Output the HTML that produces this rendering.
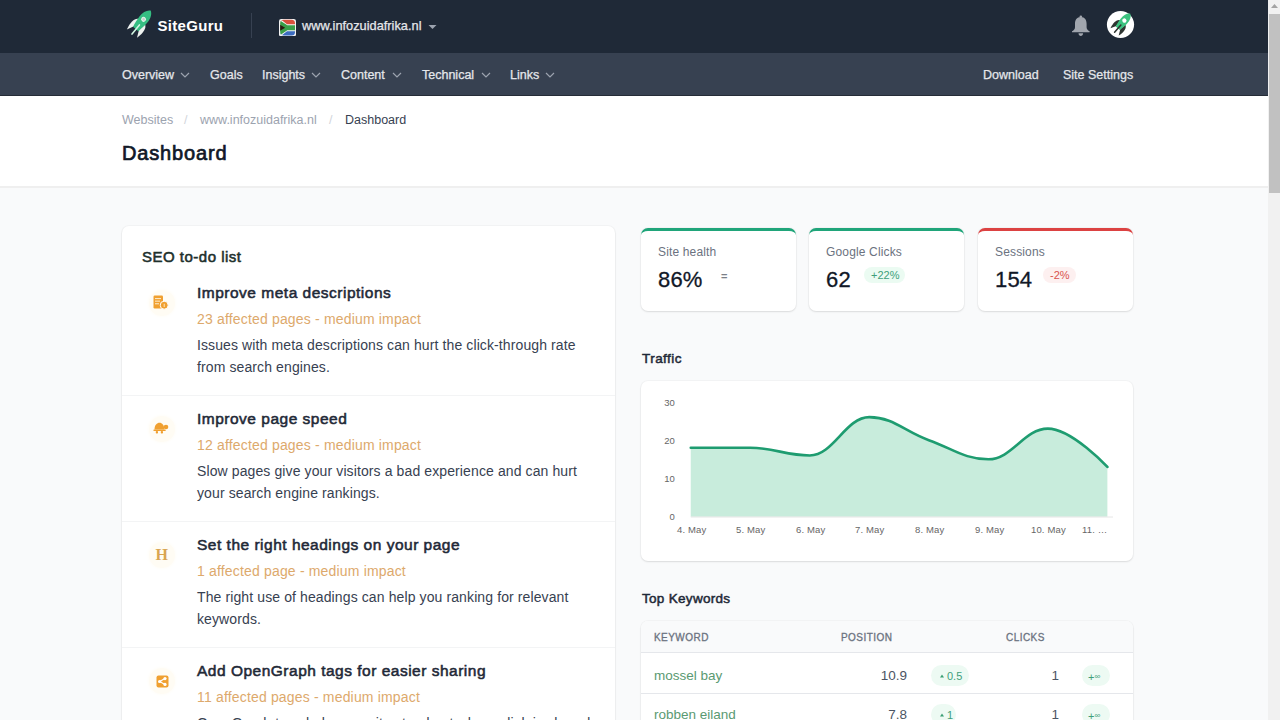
<!DOCTYPE html>
<html><head><meta charset="utf-8">
<style>
*{box-sizing:border-box;margin:0;padding:0}
html,body{width:1280px;height:720px;overflow:hidden}
body{font-family:"Liberation Sans",sans-serif;background:#f9fafb;position:relative;color:#111827}
.a{position:absolute;white-space:nowrap;line-height:1}
#top{position:absolute;left:0;top:0;width:1268px;height:53px;background:#1f2937}
#nav{position:absolute;left:0;top:53px;width:1268px;height:43px;background:#374151;border-bottom:1px solid #252c37}
#hdr{position:absolute;left:0;top:96px;width:1268px;height:92px;background:#fff;border-bottom:2px solid #efefef}
#sb{position:absolute;left:1268px;top:0;width:12px;height:720px;background:#f1f1f1}
#thumb{position:absolute;left:1269px;top:14px;width:11px;height:179px;background:#c1c1c1}
.nv{font-size:12.5px;color:#e5e7eb;top:69px;-webkit-text-stroke:.25px #e5e7eb}
.chev{position:absolute;top:72px;width:10px;height:6px}
.card{position:absolute;background:#fff;border-radius:7px;box-shadow:0 1px 2px rgba(0,0,0,.10),0 0 0 1px rgba(0,0,0,.025)}
.it{position:absolute;left:197px;font-size:15.5px;font-weight:normal;color:#1f2937;letter-spacing:.5px;-webkit-text-stroke:.55px #1f2937}
.sub{position:absolute;left:197px;font-size:14px;color:#dda96c;letter-spacing:.17px}
.desc{position:absolute;left:197px;font-size:14px;line-height:22.4px;color:#374151;white-space:nowrap;letter-spacing:.11px}
.sep{position:absolute;left:122px;width:493px;height:1px;background:#f3f4f5}
.ic{position:absolute;left:148.5px;width:26px;height:26px;border-radius:50%;background:#fffcf4;box-shadow:0 0 3px 1px #fffdf8}
.lbl{font-size:12px;color:#6b7280;top:246px;letter-spacing:.15px}
.val{font-size:22px;color:#111827;top:269px;letter-spacing:.2px;-webkit-text-stroke:.3px #111827}
.ax{font-size:9.5px;color:#666;letter-spacing:.15px}
.th{font-size:10px;font-weight:normal;color:#6b7280;letter-spacing:.45px;top:632.5px;-webkit-text-stroke:.3px #6b7280}
.kw{font-size:13.5px;color:#5a9a72}
.num{font-size:13.5px;color:#4b5563}
.pill{position:absolute;background:#edfaf3;border-radius:11px}
.pt{font-size:11px;color:#3f9f7b}
</style></head><body>
<div id="top"></div>
<div id="nav"></div>
<div id="hdr"></div>
<div id="sb"></div><div id="thumb"></div>
<svg style="position:absolute;left:1270px;top:3px" width="9" height="6"><path d="M1,5 L4.5,1 L8,5 Z" fill="#a3a3a3"/></svg>

<!-- logo -->
<svg style="position:absolute;left:118px;top:4px" width="40" height="40" viewBox="118 4 40 40">
 <g transform="translate(143.6,19.3) rotate(39)">
  <path d="M-4.2,3 C-7.5,4.5 -8.8,10 -6.5,18.5 L-3.2,11.5 Z" fill="#eef2f0"/>
  <path d="M4.2,3 C7.5,4.5 8.8,10 6.5,18.5 L3.2,11.5 Z" fill="#eef2f0"/>
  <path d="M0,-11.2 C3.2,-9.5 5.3,-5 5,0.5 C4.8,5 4.2,9 3.4,12.5 L-3.4,12.5 C-4.2,9 -4.8,5 -5,0.5 C-5.3,-5 -3.2,-9.5 0,-11.2 Z" fill="#35be82"/>
  <circle cx="0" cy="0" r="1.9" fill="#c9cfcb" stroke="#dff7ea" stroke-width="1.1"/>
  <line x1="0.3" y1="7" x2="0.3" y2="18.8" stroke="#d2f6e3" stroke-width="1.6" stroke-linecap="round"/>
 </g>
</svg>
<div class="a" style="left:157.5px;top:17.8px;font-size:15px;font-weight:bold;color:#fff;letter-spacing:.3px">SiteGuru</div>
<div style="position:absolute;left:251px;top:13px;width:1px;height:25px;background:#374151"></div>
<!-- flag -->
<svg style="position:absolute;left:278.5px;top:18.7px" width="17" height="17.5" viewBox="0 0 17 17.5">
 <defs><clipPath id="fc"><rect x="1.2" y="0.8" width="14.8" height="15.8" rx="3.5"/></clipPath></defs>
 <rect x="0" y="0" width="17" height="17.5" rx="2.2" fill="#f2f2f2"/>
 <g clip-path="url(#fc)">
  <rect x="0" y="0" width="17" height="8.7" fill="#d9503c"/>
  <rect x="0" y="8.7" width="17" height="9" fill="#3b6cc0"/>
  <path d="M0,-1 L8,5.2 L17,5.2 L17,12.2 L8,12.2 L0,18.5 Z" fill="#f4f4f4"/>
  <path d="M0,0.8 L8.3,6.2 L17,6.2 L17,11.2 L8.3,11.2 L0,16.8 Z" fill="#3a9e48"/>
  <path d="M0,5.2 L6.2,8.7 L0,12.2 Z" fill="#2b1a10"/>
 </g>
</svg>
<div class="a" style="left:302px;top:20px;font-size:12.8px;color:#e5e7eb;-webkit-text-stroke:.25px #e5e7eb">www.infozuidafrika.nl</div>
<svg style="position:absolute;left:428px;top:24px" width="9" height="6"><path d="M0.5,1 L8.5,1 L4.5,5 Z" fill="#9ca3af"/></svg>

<!-- bell -->
<svg style="position:absolute;left:1070px;top:14px" width="22" height="23" viewBox="0 0 22 23">
 <circle cx="10.8" cy="2.7" r="1.3" fill="#a1a6ae"/>
 <path d="M10.8,3 C14.9,3 16.6,6.2 16.6,10 L16.6,13.3 C16.6,15.4 18.2,16.6 19.6,17.3 L19.6,18.3 L2,18.3 L2,17.3 C3.4,16.6 5,15.4 5,13.3 L5,10 C5,6.2 6.7,3 10.8,3 Z" fill="#a1a6ae"/>
 <path d="M8.5,19.2 L13.1,19.2 C13,20.9 12,22 10.8,22 C9.6,22 8.6,20.9 8.5,19.2 Z" fill="#a1a6ae"/>
</svg>
<!-- avatar -->
<svg style="position:absolute;left:1106px;top:10px" width="29" height="29" viewBox="0 0 29 29">
 <circle cx="14.5" cy="14.5" r="13.6" fill="#fff"/>
 <g transform="translate(18.4,10.6) rotate(41) scale(.81)">
  <path d="M-4.2,3 C-7.8,4.5 -9.2,10 -6.8,18.5 L-3.2,11.5 Z" fill="#2e3531"/>
  <path d="M4.2,3 C7.8,4.5 9.2,10 6.8,18.5 L3.2,11.5 Z" fill="#2e3531"/>
  <path d="M0,-11.2 C3.2,-9.5 5.3,-5 5,0.5 C4.8,5 4.2,9 3.4,12.5 L-3.4,12.5 C-4.2,9 -4.8,5 -5,0.5 C-5.3,-5 -3.2,-9.5 0,-11.2 Z" fill="#3cc27f"/>
  <circle cx="0" cy="0" r="2.6" fill="#fff"/>
  <line x1="0.3" y1="7" x2="0.3" y2="18.8" stroke="#2e3531" stroke-width="1.9" stroke-linecap="round"/>
 </g>
</svg>

<div class="a nv" style="left:122px">Overview</div>
<div class="a nv" style="left:210px">Goals</div>
<div class="a nv" style="left:262px">Insights</div>
<div class="a nv" style="left:341px">Content</div>
<div class="a nv" style="left:422px">Technical</div>
<div class="a nv" style="left:510px">Links</div>
<div class="a nv" style="left:983px">Download</div>
<div class="a nv" style="left:1063px">Site Settings</div>
<svg class="chev" style="left:180px" viewBox="0 0 10 6"><path d="M1,1 L5,5 L9,1" fill="none" stroke="#9ca3af" stroke-width="1.2"/></svg>
<svg class="chev" style="left:311px" viewBox="0 0 10 6"><path d="M1,1 L5,5 L9,1" fill="none" stroke="#9ca3af" stroke-width="1.2"/></svg>
<svg class="chev" style="left:392px" viewBox="0 0 10 6"><path d="M1,1 L5,5 L9,1" fill="none" stroke="#9ca3af" stroke-width="1.2"/></svg>
<svg class="chev" style="left:481px" viewBox="0 0 10 6"><path d="M1,1 L5,5 L9,1" fill="none" stroke="#9ca3af" stroke-width="1.2"/></svg>
<svg class="chev" style="left:545px" viewBox="0 0 10 6"><path d="M1,1 L5,5 L9,1" fill="none" stroke="#9ca3af" stroke-width="1.2"/></svg>

<div class="a" style="left:122px;top:114px;font-size:12.5px;color:#9ca3af">Websites</div>
<div class="a" style="left:184px;top:114px;font-size:12.5px;color:#d1d5db">/</div>
<div class="a" style="left:200px;top:114px;font-size:12.5px;color:#9ca3af">www.infozuidafrika.nl</div>
<div class="a" style="left:329px;top:114px;font-size:12.5px;color:#d1d5db">/</div>
<div class="a" style="left:345px;top:114px;font-size:12.5px;color:#374151">Dashboard</div>
<div class="a" style="left:122px;top:143px;font-size:20px;font-weight:normal;color:#111827;letter-spacing:.85px;-webkit-text-stroke:.7px #111827">Dashboard</div>

<!-- left card -->
<div class="card" style="left:122px;top:226px;width:493px;height:560px"></div>
<div class="a" style="left:142px;top:249px;font-size:15px;font-weight:normal;color:#1e302c;letter-spacing:.5px;-webkit-text-stroke:.55px #1e302c">SEO to-do list</div>

<div class="ic" style="top:289.5px"></div>
<svg style="position:absolute;left:153px;top:295px" width="16" height="15" viewBox="0 0 16 15">
 <rect x="0.5" y="0.5" width="9.5" height="13" rx="1.2" fill="#f0a030"/>
 <rect x="2" y="3" width="6" height="1.1" fill="#fde6c0"/><rect x="2" y="5.6" width="5" height="1.1" fill="#fde6c0"/><rect x="2" y="8.2" width="4" height="1.1" fill="#fde6c0"/>
 <circle cx="11.2" cy="10.2" r="4" fill="#f0a030" stroke="#fff" stroke-width="1"/>
 <rect x="10.7" y="8.8" width="1" height="3.2" fill="#fde6c0"/>
</svg>
<div class="a it" style="top:285px">Improve meta descriptions</div>
<div class="a sub" style="top:312px">23 affected pages - medium impact</div>
<div class="desc" style="top:334px">Issues with meta descriptions can hurt the click-through rate<br>from search engines.</div>
<div class="sep" style="top:395px"></div>

<div class="ic" style="top:415.5px"></div>
<svg style="position:absolute;left:153px;top:421px" width="16" height="14" viewBox="0 0 16 14">
 <path d="M1.5,8.5 C1.5,4 4,1.8 6.5,1.8 C9,1.8 11.3,4 11.3,8.5 Z" fill="#f0a030"/>
 <rect x="0.3" y="8.5" width="12.5" height="1.6" rx=".8" fill="#f0a030"/>
 <circle cx="13" cy="6" r="2.3" fill="#f0a030"/>
 <rect x="2.8" y="10" width="2.2" height="2.6" rx=".8" fill="#f0a030"/><rect x="7.8" y="10" width="2.2" height="2.6" rx=".8" fill="#f0a030"/>
</svg>
<div class="a it" style="top:411px">Improve page speed</div>
<div class="a sub" style="top:438px">12 affected pages - medium impact</div>
<div class="desc" style="top:460px">Slow pages give your visitors a bad experience and can hurt<br>your search engine rankings.</div>
<div class="sep" style="top:521px"></div>

<div class="ic" style="top:541.5px"></div>
<div class="a" style="left:155.5px;top:547px;font-family:'Liberation Serif',serif;font-weight:bold;font-size:16px;color:#d9a550">H</div>
<div class="a it" style="top:537px">Set the right headings on your page</div>
<div class="a sub" style="top:564px">1 affected page - medium impact</div>
<div class="desc" style="top:586px">The right use of headings can help you ranking for relevant<br>keywords.</div>
<div class="sep" style="top:647px"></div>

<div class="ic" style="top:667.5px"></div>
<svg style="position:absolute;left:155.5px;top:674.8px" width="13" height="13" viewBox="0 0 13 13">
 <rect x="0.5" y="0.5" width="12" height="12" rx="2" fill="#f0a030"/>
 <circle cx="3.6" cy="6.5" r="1.6" fill="#fff"/><circle cx="9" cy="3.6" r="1.6" fill="#fff"/><circle cx="9" cy="9.4" r="1.6" fill="#fff"/>
 <path d="M3.6,6.5 L9,3.6 M3.6,6.5 L9,9.4" stroke="#fff" stroke-width="1.1"/>
</svg>
<div class="a it" style="top:663px">Add OpenGraph tags for easier sharing</div>
<div class="a sub" style="top:690px">11 affected pages - medium impact</div>
<div class="desc" style="top:712px">OpenGraph tags help your site stand out when a link is shared</div>

<!-- stat cards -->
<div class="card" style="left:641px;top:228px;width:155px;height:83px;border-top:3px solid #20a57a"></div>
<div class="card" style="left:809px;top:228px;width:155px;height:83px;border-top:3px solid #20a57a"></div>
<div class="card" style="left:978px;top:228px;width:155px;height:83px;border-top:3px solid #dc4242"></div>
<div class="a lbl" style="left:658px">Site health</div>
<div class="a val" style="left:658px">86%</div>
<div class="a" style="left:721px;top:271px;font-size:11px;color:#7b8088;font-weight:bold">=</div>
<div class="a lbl" style="left:826px">Google Clicks</div>
<div class="a val" style="left:826px">62</div>
<div class="pill" style="left:864px;top:267px;width:41px;height:16px;background:#ebfbf2"></div>
<div class="a pt" style="left:871px;top:270px">+22%</div>
<div class="a lbl" style="left:995px">Sessions</div>
<div class="a val" style="left:995px">154</div>
<div class="pill" style="left:1043px;top:267px;width:33px;height:16px;background:#fdf0f0"></div>
<div class="a pt" style="left:1050px;top:270px;color:#d9534f">-2%</div>

<!-- traffic -->
<div class="a" style="left:642px;top:352px;font-size:13.5px;font-weight:normal;color:#1f2937;letter-spacing:.45px;-webkit-text-stroke:.5px #1f2937">Traffic</div>
<div class="card" style="left:641px;top:381px;width:492px;height:180px"></div>
<svg style="position:absolute;left:0;top:0" width="1280" height="720" viewBox="0 0 1280 720">
 <path d="M690.75,447.81 C690.75,447.81 726.46,447.81 750.27,447.81 C774.08,447.81 785.98,455.47 809.79,455.47 C833.60,455.47 845.50,417.17 869.31,417.17 C893.12,417.17 905.02,431.72 928.83,440.15 C952.64,448.58 964.54,459.30 988.35,459.30 C1012.16,459.30 1024.06,428.66 1047.87,428.66 C1071.68,428.66 1107.39,466.96 1107.39,466.96 L1107.39,516.75 L690.75,516.75 Z" fill="#c8ecdc"/>
 <path d="M690.75,447.81 C690.75,447.81 726.46,447.81 750.27,447.81 C774.08,447.81 785.98,455.47 809.79,455.47 C833.60,455.47 845.50,417.17 869.31,417.17 C893.12,417.17 905.02,431.72 928.83,440.15 C952.64,448.58 964.54,459.30 988.35,459.30 C1012.16,459.30 1024.06,428.66 1047.87,428.66 C1071.68,428.66 1107.39,466.96 1107.39,466.96" fill="none" stroke="#1e9c70" stroke-width="2.6" stroke-linejoin="round" stroke-linecap="round"/>
 <path d="M690.75,517 L1113,517" stroke="#e6e6e6" stroke-width="1"/>
</svg>
<div class="a ax" style="right:605px;top:398px">30</div>
<div class="a ax" style="right:605px;top:436px">20</div>
<div class="a ax" style="right:605px;top:474px">10</div>
<div class="a ax" style="right:605px;top:512px">0</div>
<div class="a ax" style="left:677px;top:525px">4. May</div>
<div class="a ax" style="left:736px;top:525px">5. May</div>
<div class="a ax" style="left:796px;top:525px">6. May</div>
<div class="a ax" style="left:855px;top:525px">7. May</div>
<div class="a ax" style="left:915px;top:525px">8. May</div>
<div class="a ax" style="left:975px;top:525px">9. May</div>
<div class="a ax" style="left:1031px;top:525px">10. May</div>
<div class="a ax" style="left:1082px;top:525px">11. …</div>

<!-- keywords -->
<div class="a" style="left:642px;top:592px;font-size:13.5px;font-weight:normal;color:#1f2937;letter-spacing:.3px;-webkit-text-stroke:.5px #1f2937">Top Keywords</div>
<div class="card" style="left:641px;top:621px;width:492px;height:140px;overflow:hidden">
 <div style="position:absolute;left:0;top:0;width:100%;height:32px;background:#f9fafb;border-bottom:1px solid #e5e7eb"></div>
 <div style="position:absolute;left:0;top:72px;width:100%;height:1px;background:#e5e7eb"></div>
</div>
<div class="a th" style="left:654px">KEYWORD</div>
<div class="a th" style="left:841px">POSITION</div>
<div class="a th" style="left:1006px">CLICKS</div>
<div class="a kw" style="left:654px;top:669px">mossel bay</div>
<div class="a num" style="right:373px;top:669px">10.9</div>
<div class="pill" style="left:931px;top:665px;width:38px;height:21px"></div>
<svg style="position:absolute;left:940px;top:674px" width="4" height="4"><path d="M0,3.5 L2,0.5 L4,3.5Z" fill="#3b9f74"/></svg>
<div class="a pt" style="left:947px;top:671px">0.5</div>
<div class="a num" style="right:221px;top:669px">1</div>
<div class="pill" style="left:1082px;top:665px;width:28px;height:21px"></div>
<div class="a pt" style="left:1088px;top:672px;font-size:11px">+<span style="font-size:8px;position:relative;top:-2px">∞</span></div>

<div class="a kw" style="left:654px;top:708px">robben eiland</div>
<div class="a num" style="right:373px;top:708px">7.8</div>
<div class="pill" style="left:931px;top:704px;width:25px;height:21px"></div>
<svg style="position:absolute;left:940px;top:713px" width="4" height="4"><path d="M0,3.5 L2,0.5 L4,3.5Z" fill="#3b9f74"/></svg>
<div class="a pt" style="left:947px;top:710px">1</div>
<div class="a num" style="right:221px;top:708px">1</div>
<div class="pill" style="left:1082px;top:704px;width:28px;height:21px"></div>
<div class="a pt" style="left:1088px;top:711px;font-size:11px">+<span style="font-size:8px;position:relative;top:-2px">∞</span></div>
</body></html>
